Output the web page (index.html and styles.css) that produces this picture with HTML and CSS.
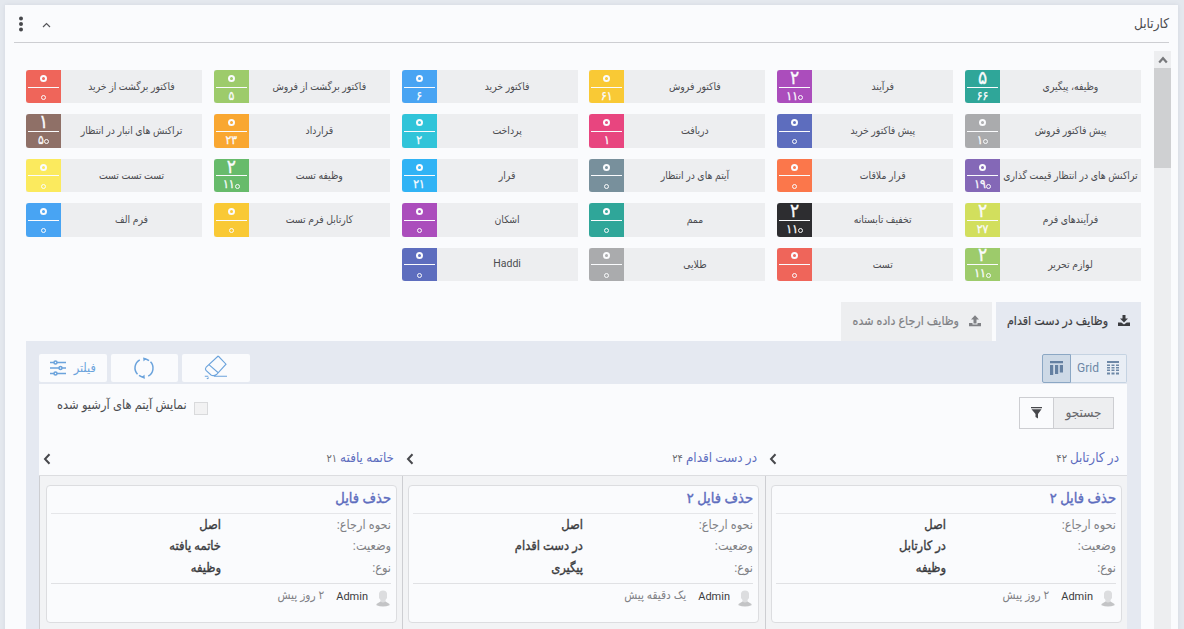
FILE: index.html
```html
<!DOCTYPE html>
<html lang="fa" dir="rtl">
<head>
<meta charset="utf-8">
<title>کارتابل</title>
<link rel="stylesheet" href="styles.css">
</head>
<body>
<main class="window">
  <header class="window-head">
    <h1 class="window-title">کارتابل</h1>
    <div class="window-tools">
      <svg width="9" height="6" viewBox="0 0 9 6"><path d="M1 5l3.500-3.500L8 5" fill="none" stroke="#55565a" stroke-width="1.200"/></svg>
      <svg width="6" height="17" viewBox="0 0 6 17" fill="#47484c"><circle cx="3" cy="2.500" r="2"/><circle cx="3" cy="8" r="2"/><circle cx="3" cy="13.500" r="2"/></svg>
    </div>
  </header>
  <div class="window-body">
    <div class="scrollbar">
      <div class="scroll-up"><svg width="10" height="8" viewBox="0 0 10 8"><path d="M1.200 6.500L5 2.200l3.800 4.300" fill="none" stroke="#77787b" stroke-width="2.200"/></svg></div>
      <div class="scroll-thumb"></div>
    </div>
    <div class="content">
      <section class="tiles">
        <div class="tile"><span class="name">وظیفه، پیگیری</span><span class="count teal"><b>۵</b><i>۶۶</i></span></div>
        <div class="tile"><span class="name">فرآیند</span><span class="count purple"><b>۲</b><i>۱۱<u>۰</u></i></span></div>
        <div class="tile"><span class="name">فاکتور فروش</span><span class="count amber"><b><u>۰</u></b><i>۶۱</i></span></div>
        <div class="tile"><span class="name">فاکتور خرید</span><span class="count blue"><b><u>۰</u></b><i>۶</i></span></div>
        <div class="tile"><span class="name">فاکتور برگشت از فروش</span><span class="count lime"><b><u>۰</u></b><i>۵</i></span></div>
        <div class="tile"><span class="name">فاکتور برگشت از خرید</span><span class="count red"><b><u>۰</u></b><i><u>۰</u></i></span></div>

        <div class="tile"><span class="name">پیش فاکتور فروش</span><span class="count gray"><b><u>۰</u></b><i>۱<u>۰</u></i></span></div>
        <div class="tile"><span class="name">پیش فاکتور خرید</span><span class="count indigo"><b><u>۰</u></b><i><u>۰</u></i></span></div>
        <div class="tile"><span class="name">دریافت</span><span class="count pink"><b><u>۰</u></b><i>۱</i></span></div>
        <div class="tile"><span class="name">پرداخت</span><span class="count cyan"><b><u>۰</u></b><i>۲</i></span></div>
        <div class="tile"><span class="name">قرارداد</span><span class="count orange"><b><u>۰</u></b><i>۲۳</i></span></div>
        <div class="tile"><span class="name">تراکنش های انبار در انتظار</span><span class="count brown"><b>۱</b><i>۵<u>۰</u></i></span></div>

        <div class="tile"><span class="name">تراکنش های در انتظار قیمت گذاری</span><span class="count violet"><b><u>۰</u></b><i>۱۹<u>۰</u></i></span></div>
        <div class="tile"><span class="name">قرار ملاقات</span><span class="count coral"><b><u>۰</u></b><i><u>۰</u></i></span></div>
        <div class="tile"><span class="name">آیتم های در انتظار</span><span class="count slate"><b><u>۰</u></b><i><u>۰</u></i></span></div>
        <div class="tile"><span class="name">قرار</span><span class="count sky"><b><u>۰</u></b><i>۲۱</i></span></div>
        <div class="tile"><span class="name">وظیفه تست</span><span class="count green"><b>۲</b><i>۱۱<u>۰</u></i></span></div>
        <div class="tile"><span class="name">تست تست تست</span><span class="count yellow"><b><u>۰</u></b><i><u>۰</u></i></span></div>

        <div class="tile"><span class="name">فرآیندهای فرم</span><span class="count citron"><b>۲</b><i>۲۷</i></span></div>
        <div class="tile"><span class="name">تخفیف تابستانه</span><span class="count black"><b>۲</b><i>۱۱<u>۰</u></i></span></div>
        <div class="tile"><span class="name">ممم</span><span class="count teal"><b><u>۰</u></b><i><u>۰</u></i></span></div>
        <div class="tile"><span class="name">اشکان</span><span class="count purple"><b><u>۰</u></b><i><u>۰</u></i></span></div>
        <div class="tile"><span class="name">کارتابل فرم تست</span><span class="count amber"><b><u>۰</u></b><i><u>۰</u></i></span></div>
        <div class="tile"><span class="name">فرم الف</span><span class="count blue"><b><u>۰</u></b><i><u>۰</u></i></span></div>

        <div class="tile"><span class="name">لوازم تحریر</span><span class="count lime"><b>۲</b><i>۱۱<u>۰</u></i></span></div>
        <div class="tile"><span class="name">تست</span><span class="count red"><b><u>۰</u></b><i><u>۰</u></i></span></div>
        <div class="tile"><span class="name">طلایی</span><span class="count gray"><b><u>۰</u></b><i><u>۰</u></i></span></div>
        <div class="tile"><span class="name latin">Haddi</span><span class="count indigo"><b><u>۰</u></b><i><u>۰</u></i></span></div>
      </section>

      <nav class="tabs">
        <a class="tab active"><svg width="12" height="12" viewBox="0 0 12 12" fill="currentColor"><path d="M4.500 0h3v3.500H10L6 7.500 2 3.500h2.500zM0 7.500h3.300L6 9.500l2.700-2H12V11H0z"/></svg><span>وظایف در دست اقدام</span></a>
        <a class="tab"><svg width="12" height="12" viewBox="0 0 12 12" fill="currentColor"><path d="M4.500 8.500h3v-4H10L6 .3 2 4.500h2.500zM0 8h3.500v1.500h5V8H12v3.200H0z"/></svg><span>وظایف ارجاع داده شده</span></a>
      </nav>

      <section class="panel">
        <div class="toolbar">
          <div class="switch">
            <span class="mode"><svg width="12" height="14" viewBox="0 0 12 14" fill="#6d87a6"><path d="M0 0h12v2H0zM0 3.500h3v1.500H0zm4.500 0h3v1.500h-3zm4.500 0h3v1.500H9zM0 6h3v1.500H0zm4.500 0h3v1.500h-3zM9 6h3v1.500H9zM0 8.500h3V10H0zm4.500 0h3V10h-3zm4.500 0h3V10H9zM0 11.500h3V13.500H0zm4.500 0h3v2h-3zm4.500 0h3v2H9z"/></svg><em>Grid</em></span>
            <span class="mode on"><svg width="13" height="14" viewBox="0 0 13 14" fill="#6480a1"><path d="M0 0h13v2.300H0zM0 4h3.200v10H0zM5 4h3.200v9H5zM9.800 4H13v7.500H9.800z"/></svg></span>
          </div>
          <div class="actions">
            <span class="action"><svg width="24" height="25" viewBox="0 0 24 25" fill="none" stroke="#6ba3dc" stroke-width="1.100"><path d="M14.200 1L22 9.200 12.500 19.500Q9.500 21.500 7 20L2 15.500Q.8 13.800 2.200 12L14.200 1M5.200 9.800L14.500 18M10 21.300h13M.8 21.300h3.500"/><path d="M2.800 23.800l2-1"/></svg></span>
            <span class="action"><svg width="22" height="22" viewBox="0 0 22 22" fill="none" stroke="#6ba3dc" stroke-width="1.500"><path d="M10.500 1.800A9.200 9.200 0 0 1 16 3.600M17.500 4.800A9.200 9.200 0 0 1 15.200 19.200M11.500 20.200A9.200 9.200 0 0 1 6 18.400M4.500 17.200A9.200 9.200 0 0 1 6.800 2.800"/><path d="M10.500.8L12.800 2 10.500 3.700M11.500 18.300L9.200 20l2.300 1.500" fill="#6ba3dc" stroke-width="1"/></svg></span>
            <span class="action"><em>فیلتر</em><svg width="16" height="16" viewBox="0 0 16 16" fill="#fafbfd" stroke="#6ba3dc" stroke-width="1.500"><path d="M0 2.500h16M0 8h16M0 13.500h16"/><circle cx="5.500" cy="2.500" r="1.500"/><circle cx="10.500" cy="8" r="1.500"/><circle cx="5.500" cy="13.500" r="1.500"/></svg></span>
          </div>
        </div>
        <div class="board-wrap">
          <div class="filters">
            <div class="search"><span class="search-label">جستجو</span><span class="search-icon"><svg width="11" height="12" viewBox="0 0 11 12" fill="#47484c"><path d="M0 0h11v1.300H0zM.5 2.300h10L7 7v4.500L4.500 10V7z"/></svg></span></div>
            <label class="archive"><span class="box"></span><span>نمایش آیتم های آرشیو شده</span></label>
          </div>
          <div class="board">
            <section class="lane">
              <header class="lane-head"><span><strong>در کارتابل</strong> <small>۴۲</small></span><svg class="chev" width="8" height="12" viewBox="0 0 8 12"><path d="M6.500 1.200L2 6l4.500 4.800" fill="none" stroke="#47484c" stroke-width="2"/></svg></header>
              <div class="lane-body">
                <article class="card">
                  <h2>حذف فایل ۲</h2>
                  <dl><dt>نحوه ارجاع:</dt><dd>اصل</dd><dt>وضعیت:</dt><dd>در کارتابل</dd><dt>نوع:</dt><dd>وظیفه</dd></dl>
                  <footer><svg class="avatar" width="14" height="17" viewBox="0 0 14 17"><path d="M3 3.500Q3.500.5 7 .5t4 3v4.500L9.500 10v3h-5v-3L3 8z" fill="#dcdddf"/><path d="M4.500 11.500Q7 13.500 9.500 11.500L13.500 14v1.200q-6.500 2.600-13 0V14z" fill="#c3c4c6"/></svg><span class="who">Admin</span><span class="when">۲ روز پیش</span></footer>
                </article>
              </div>
            </section>
            <section class="lane">
              <header class="lane-head"><span><strong>در دست اقدام</strong> <small>۲۴</small></span><svg class="chev" width="8" height="12" viewBox="0 0 8 12"><path d="M6.500 1.200L2 6l4.500 4.800" fill="none" stroke="#47484c" stroke-width="2"/></svg></header>
              <div class="lane-body">
                <article class="card">
                  <h2>حذف فایل ۲</h2>
                  <dl><dt>نحوه ارجاع:</dt><dd>اصل</dd><dt>وضعیت:</dt><dd>در دست اقدام</dd><dt>نوع:</dt><dd>پیگیری</dd></dl>
                  <footer><svg class="avatar" width="14" height="17" viewBox="0 0 14 17"><path d="M3 3.500Q3.500.5 7 .5t4 3v4.500L9.500 10v3h-5v-3L3 8z" fill="#dcdddf"/><path d="M4.500 11.500Q7 13.500 9.500 11.500L13.500 14v1.200q-6.500 2.600-13 0V14z" fill="#c3c4c6"/></svg><span class="who">Admin</span><span class="when">یک دقیقه پیش</span></footer>
                </article>
              </div>
            </section>
            <section class="lane">
              <header class="lane-head"><span><strong>خاتمه یافته</strong> <small>۲۱</small></span><svg class="chev" width="8" height="12" viewBox="0 0 8 12"><path d="M6.500 1.200L2 6l4.500 4.800" fill="none" stroke="#47484c" stroke-width="2"/></svg></header>
              <div class="lane-body">
                <article class="card">
                  <h2>حذف فایل</h2>
                  <dl><dt>نحوه ارجاع:</dt><dd>اصل</dd><dt>وضعیت:</dt><dd>خاتمه یافته</dd><dt>نوع:</dt><dd>وظیفه</dd></dl>
                  <footer><svg class="avatar" width="14" height="17" viewBox="0 0 14 17"><path d="M3 3.500Q3.500.5 7 .5t4 3v4.500L9.500 10v3h-5v-3L3 8z" fill="#dcdddf"/><path d="M4.500 11.500Q7 13.500 9.500 11.500L13.500 14v1.200q-6.500 2.600-13 0V14z" fill="#c3c4c6"/></svg><span class="who">Admin</span><span class="when">۲ روز پیش</span></footer>
                </article>
              </div>
            </section>
          </div>
        </div>
      </section>
    </div>
  </div>
</main>
</body>
</html>
```

FILE: styles.css
```css
* { box-sizing: border-box; }
html, body { height: 100%; }
body {
  margin: 0;
  padding: 5px 6px 0 5px;
  overflow: hidden;
  background: #e4e8ee;
  color: #4b4c50;
  font: 12px/1.3 Roboto, "DejaVu Sans Condensed", "DejaVu Sans", sans-serif;
  white-space: nowrap;
}
em, i, b, strong, small { font-style: normal; font-weight: normal; }
svg { flex: none; display: block; }

.window {
  height: 640px;
  padding: 0 9px;
  background: #fafbfd;
  box-shadow: 0 0 4px rgba(90, 100, 120, .12);
}
.window-head {
  display: flex;
  justify-content: space-between;
  align-items: center;
  height: 38px;
  border-bottom: 1px solid #cdced2;
}
.window-title { margin: 0; font-size: 13.500px; font-weight: normal; }
.window-tools { display: flex; align-items: center; gap: 17.500px; padding: 2px 0 0 0; margin-left: 4px; }

.window-body { display: flex; padding-top: 8px; margin-right: -2px; }
.scrollbar { flex: none; width: 17px; height: 590px; background: #edeef0; }
.scroll-up { display: flex; align-items: center; justify-content: center; height: 17px; }
.scroll-thumb { height: 100px; background: #cfd0d2; }
.content { flex: 1; min-width: 0; padding: 19px 13px 0 12px; }

.tiles {
  display: grid;
  grid-template-columns: repeat(6, 1fr);
  gap: 11px 11.750px;
  grid-auto-rows: 33.400px;
}
.tile { display: flex; background: #edeef0; min-width: 0; }
.name {
  flex: 1;
  min-width: 0;
  display: flex;
  align-items: center;
  justify-content: center;
  font-size: 10.350px;
}
.name.latin { font-family: Roboto, sans-serif; font-size: 10.500px; }
.count {
  flex: none;
  width: 35px;
  padding: 0 2px;
  overflow: hidden;
  border-radius: 3px 0 0 3px;
  color: #fafbfd;
  text-align: center;
  direction: ltr;
}
.count b, .count i { display: flex; justify-content: center; align-items: center; -webkit-text-stroke: .3px currentColor; }
.count b { height: 17.500px; padding-bottom: 2px; line-height: 15px; font-size: 19px; border-bottom: 1px solid #fafbfd; }
.count i { height: 16px; padding-top: 1px; font-size: 12px; line-height: 15px; }
/* Zero is drawn as a ring with the digit at its centre. */
.count u {
  display: flex;
  align-items: center;
  justify-content: center;
  width: 5px;
  height: 5px;
  margin: 3px 0 0;
  border: 1.500px solid currentColor;
  border-radius: 50%;
  text-decoration: none;
  font-size: 2px;
  line-height: 2px;
  -webkit-text-stroke: 0;
}
.count b u { width: 7px; height: 7px; margin-top: 2px; border-width: 2px; font-size: 3px; line-height: 3px; }
.teal { background: #2fa699; }
.purple { background: #ab4dbc; }
.amber { background: #f9c935; }
.blue { background: #48a4f3; }
.lime { background: #9dcb6b; }
.red { background: #ef655a; }
.gray { background: #aaabad; }
.indigo { background: #5d6dbe; }
.pink { background: #e8457f; }
.cyan { background: #30c4d9; }
.orange { background: #f9a731; }
.brown { background: #8f7067; }
.violet { background: #8468b7; }
.coral { background: #fb774b; }
.slate { background: #78909c; }
.sky { background: #30b3f5; }
.green { background: #67bb6b; }
.yellow { background: #fbea5e; }
.citron { background: #d2df5d; }
.black { background: #2d2d30; }

.tabs { display: flex; gap: 4px; margin-top: 21px; }
.tab {
  display: flex;
  align-items: center;
  gap: 10px;
  width: 151px;
  height: 39px;
  padding: 0 11px;
  background: #edeef0;
  color: #808185;
  font-size: 12.350px;
  -webkit-text-stroke: .2px currentColor;
}
.tab.active { width: 145px; background: #e5e9f1; color: #3b3c40; }

.panel { padding: 13px 14px 0 13px; background: #e5e9f1; }
.toolbar { display: flex; justify-content: space-between; height: 30px; }
.switch { display: flex; height: 29px; }
.mode {
  display: flex;
  align-items: center;
  gap: 8px;
  width: 56px;
  padding: 0 7px;
  border: 1px solid #c5d3e2;
  border-left: 0;
  border-radius: 0 2px 2px 0;
  background: #e9eef5;
  color: #6d87a6;
  font-family: Roboto, sans-serif;
}
.mode.on { width: 29px; border: 1px solid #8ba7c4; border-radius: 2px 0 0 2px; background: #cdd9e6; }
.actions { display: flex; gap: 4px; }
.action {
  display: flex;
  align-items: center;
  justify-content: center;
  gap: 8px;
  width: 67.500px;
  height: 28px;
  border-radius: 2px;
  background: #fafbfd;
  color: #6ba3dc;
  font-size: 12.500px;
}

.board-wrap { height: 260px; background: #fafbfd; }
.filters { display: flex; justify-content: space-between; height: 54px; padding: 13px 13px 0 18px; }
.search { display: flex; height: 32px; width: 95px; border: 1px solid #cdced2; }
.search-label { flex: 1; display: flex; align-items: center; justify-content: center; background: #edeef0; color: #69696d; font-size: 13.500px; }
.search-icon { display: flex; align-items: center; justify-content: center; width: 34px; border-right: 1px solid #cdced2; }
.archive { display: flex; align-items: flex-start; gap: 7px; font-size: 12.800px; }
.box { width: 14px; height: 13px; margin-top: 5px; border: 1px solid #d9dadc; background: #f2f2f3; }

.board { display: grid; grid-template-columns: 362px 363px 363px; }
.lane-head {
  display: flex;
  justify-content: space-between;
  align-items: center;
  height: 38px;
  padding: 2px 8px 0 4px;
  border-bottom: 1px solid #dcdde0;
}
.lane-head strong { color: #5d6dbe; font-size: 13.350px; }
.lane-head small { font-size: 11px; color: #69696d; }
.chev { margin-top: 3px; }
.lane-body { height: 170px; padding: 9px 5px 0 5px; border-left: 1px solid #cdced2; background: #f2f3f5; }
.lane:nth-child(2) .lane-body { padding-right: 6px; }
.lane:last-child .lane-body { padding-left: 6px; }
.card {
  height: 138px;
  padding: 0 5px 0 4px;
  border: 1px solid #dcdde0;
  border-radius: 4px;
  background: #fafbfd;
}
.card h2 { margin: 0; height: 28px; line-height: 26px; border-bottom: 1px solid #e5e6e9; color: #5d6dbe; font-size: 14.500px; font-weight: normal; -webkit-text-stroke: .4px currentColor; }
.card dl { display: grid; grid-template-columns: 1fr 1fr; grid-auto-rows: 21.500px; margin: 0; height: 70px; border-bottom: 1px solid #e0e1e4; line-height: 21px; }
.card dt { color: #808185; font-size: 12.600px; }
.card dd { margin: 0; color: #3b3c40; font-size: 12.800px; -webkit-text-stroke: .35px currentColor; }
.card footer { display: flex; align-items: center; height: 27px; padding-right: 1px; }
.avatar { margin-top: 3px; }
.who { margin-right: 8px; font-family: Roboto, sans-serif; font-size: 11px; color: #3b3c40; }
.when { margin-right: 12px; padding-bottom: 3px; color: #808185; font-size: 11.800px; }
```
